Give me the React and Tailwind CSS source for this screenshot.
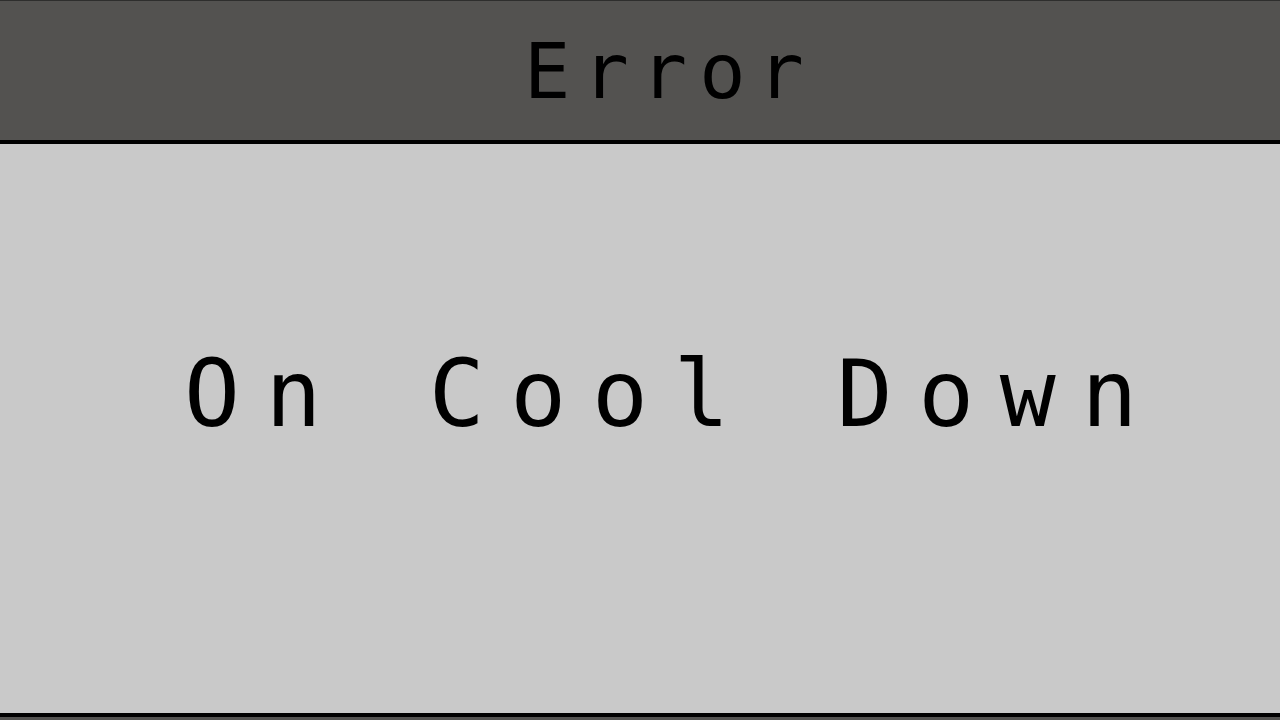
export default function App() {
  return (
    <div className="w-[1280px] h-[720px] flex flex-col overflow-hidden bg-[#535250]" style={{ fontFamily: '"DejaVu Sans Mono", "Liberation Mono", monospace' }}>
      <div className="h-px bg-[#2e2e2d]" />
      <div className="h-[143px] shrink-0 border-b-4 border-black bg-[#535250] flex items-center justify-center pl-[60px] pt-[2px]">
        <span className="text-[77px] leading-none text-black tracking-[12px]">Error</span>
      </div>
      <div className="h-[573px] shrink-0 border-b-4 border-black bg-[#c9c9c9] flex items-start justify-center pl-[67px] pt-[204px]">
        <span className="text-[93px] leading-none text-black tracking-[25.6px] whitespace-pre">On Cool Down</span>
      </div>
      <div className="flex-1 bg-[#535250]" />
    </div>
  );
}
